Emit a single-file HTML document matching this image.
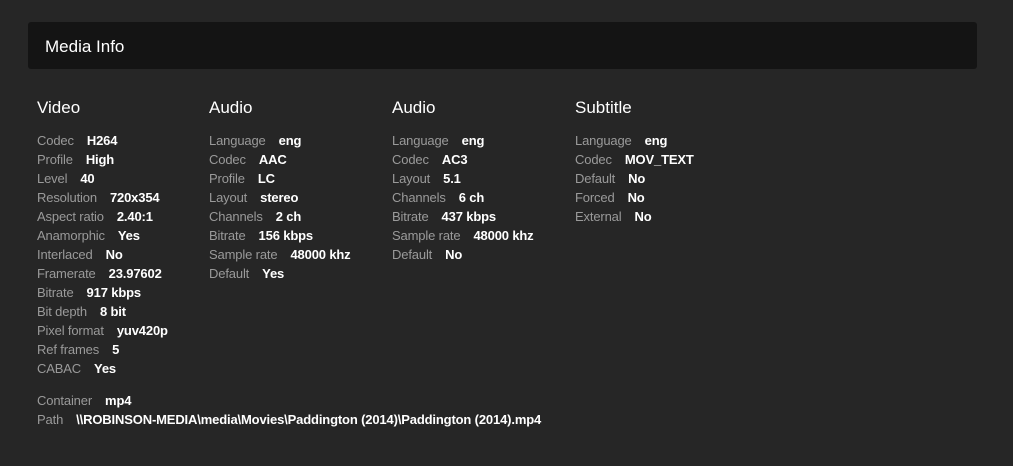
<!DOCTYPE html>
<html><head><style>
body{margin:0;background:#262626;width:1013px;height:466px;overflow:hidden;font-family:"Liberation Sans",Arial,sans-serif;}
.hdr{position:absolute;left:28px;top:22px;width:949px;height:47px;background:#141414;border-radius:3px;}
.hdr span{position:absolute;left:17px;top:15px;font-size:17px;color:#fff;}
.col{position:absolute;top:98px;}
h3{margin:0 0 13px 0;font-size:17px;font-weight:normal;color:#fff;height:20px;line-height:20px;}
.r{font-size:13px;line-height:19px;height:19px;white-space:nowrap;letter-spacing:-0.15px;}
.l{color:#9a9a9a;margin-right:13px;}
.v{color:#fff;font-weight:bold;}
</style></head><body>
<div class="hdr"><span>Media Info</span></div>
<div class="col" style="left:37px"><h3>Video</h3>
<div class="r"><span class="l">Codec</span><span class="v">H264</span></div>
<div class="r"><span class="l">Profile</span><span class="v">High</span></div>
<div class="r"><span class="l">Level</span><span class="v">40</span></div>
<div class="r"><span class="l">Resolution</span><span class="v">720x354</span></div>
<div class="r"><span class="l">Aspect ratio</span><span class="v">2.40:1</span></div>
<div class="r"><span class="l">Anamorphic</span><span class="v">Yes</span></div>
<div class="r"><span class="l">Interlaced</span><span class="v">No</span></div>
<div class="r"><span class="l">Framerate</span><span class="v">23.97602</span></div>
<div class="r"><span class="l">Bitrate</span><span class="v">917 kbps</span></div>
<div class="r"><span class="l">Bit depth</span><span class="v">8 bit</span></div>
<div class="r"><span class="l">Pixel format</span><span class="v">yuv420p</span></div>
<div class="r"><span class="l">Ref frames</span><span class="v">5</span></div>
<div class="r"><span class="l">CABAC</span><span class="v">Yes</span></div>
<div style="height:13px"></div>
<div class="r"><span class="l">Container</span><span class="v">mp4</span></div>
<div class="r"><span class="l">Path</span><span class="v">\\ROBINSON-MEDIA\media\Movies\Paddington (2014)\Paddington (2014).mp4</span></div>
</div>
<div class="col" style="left:209px"><h3>Audio</h3>
<div class="r"><span class="l">Language</span><span class="v">eng</span></div>
<div class="r"><span class="l">Codec</span><span class="v">AAC</span></div>
<div class="r"><span class="l">Profile</span><span class="v">LC</span></div>
<div class="r"><span class="l">Layout</span><span class="v">stereo</span></div>
<div class="r"><span class="l">Channels</span><span class="v">2 ch</span></div>
<div class="r"><span class="l">Bitrate</span><span class="v">156 kbps</span></div>
<div class="r"><span class="l">Sample rate</span><span class="v">48000 khz</span></div>
<div class="r"><span class="l">Default</span><span class="v">Yes</span></div>
</div>
<div class="col" style="left:392px"><h3>Audio</h3>
<div class="r"><span class="l">Language</span><span class="v">eng</span></div>
<div class="r"><span class="l">Codec</span><span class="v">AC3</span></div>
<div class="r"><span class="l">Layout</span><span class="v">5.1</span></div>
<div class="r"><span class="l">Channels</span><span class="v">6 ch</span></div>
<div class="r"><span class="l">Bitrate</span><span class="v">437 kbps</span></div>
<div class="r"><span class="l">Sample rate</span><span class="v">48000 khz</span></div>
<div class="r"><span class="l">Default</span><span class="v">No</span></div>
</div>
<div class="col" style="left:575px"><h3>Subtitle</h3>
<div class="r"><span class="l">Language</span><span class="v">eng</span></div>
<div class="r"><span class="l">Codec</span><span class="v">MOV_TEXT</span></div>
<div class="r"><span class="l">Default</span><span class="v">No</span></div>
<div class="r"><span class="l">Forced</span><span class="v">No</span></div>
<div class="r"><span class="l">External</span><span class="v">No</span></div>
</div>
</body></html>
